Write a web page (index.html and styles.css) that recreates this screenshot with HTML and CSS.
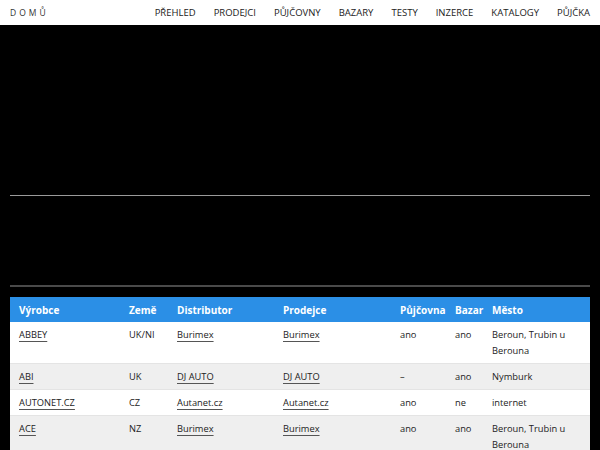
FILE: index.html
```html
<!DOCTYPE html>
<html lang="cs">
<head>
<meta charset="utf-8">
<link rel="stylesheet" href="styles.css">
</head>
<body>
<header class="topbar">
  <a class="brand" href="#">DOMŮ</a>
  <nav class="menu">
    <a href="#">PŘEHLED</a>
    <a href="#">PRODEJCI</a>
    <a href="#">PŮJČOVNY</a>
    <a href="#">BAZARY</a>
    <a href="#">TESTY</a>
    <a href="#">INZERCE</a>
    <a href="#">KATALOGY</a>
    <a href="#">PŮJČKA</a>
  </nav>
</header>
<main class="page">
  <div class="hero"></div>
  <hr class="rule rule-light">
  <div class="spacer"></div>
  <hr class="rule rule-dark">
  <table class="data">
    <colgroup>
      <col class="c1"><col class="c2"><col class="c3"><col class="c4"><col class="c5"><col class="c6"><col class="c7">
    </colgroup>
    <thead>
      <tr><th>Výrobce</th><th>Země</th><th>Distributor</th><th>Prodejce</th><th>Půjčovna</th><th>Bazar</th><th>Město</th></tr>
    </thead>
    <tbody>
      <tr><td><a href="#">ABBEY</a></td><td>UK/NI</td><td><a href="#">Burimex</a></td><td><a href="#">Burimex</a></td><td>ano</td><td>ano</td><td>Beroun, Trubin u Berouna</td></tr>
      <tr><td><a href="#">ABI</a></td><td>UK</td><td><a href="#">DJ AUTO</a></td><td><a href="#">DJ AUTO</a></td><td>–</td><td>ano</td><td>Nymburk</td></tr>
      <tr><td><a href="#">AUTONET.CZ</a></td><td>CZ</td><td><a href="#">Autanet.cz</a></td><td><a href="#">Autanet.cz</a></td><td>ano</td><td>ne</td><td>internet</td></tr>
      <tr><td><a href="#">ACE</a></td><td>NZ</td><td><a href="#">Burimex</a></td><td><a href="#">Burimex</a></td><td>ano</td><td>ano</td><td>Beroun, Trubin u Berouna</td></tr>
    </tbody>
  </table>
</main>
</body>
</html>
```

FILE: styles.css
```css
* { box-sizing: border-box; }
html, body { margin: 0; padding: 0; background: #000; }
body { font-family: "Open Sans", "Noto Sans", sans-serif; color: #222; }

.topbar {
  height: 25px;
  background: #fff;
  display: flex;
  align-items: center;
  justify-content: space-between;
  padding: 0 10px;
}
.brand {
  font-size: 8.5px;
  letter-spacing: 3px;
  color: #333;
  text-decoration: none;
}
.menu { display: flex; gap: 18px; }
.menu a {
  font-size: 9.5px;
  color: #222;
  text-decoration: none;
}

.page { padding: 0 10px; }
.hero { height: 170px; }
.rule { border: 0; margin: 0; }
.rule-light { height: 1px; background: #9a9a9a; }
.spacer { height: 89px; }
.rule-dark { height: 2px; background: #4a4a4a; }

.data {
  margin-top: 10px;
  width: 100%;
  table-layout: fixed;
  border-collapse: collapse;
  font-size: 9.3px;
  background: #fff;
}
.data th {
  background: #2b8fe6;
  color: #fff;
  font-weight: bold;
  font-size: 10px;
  text-align: left;
  height: 25px;
  padding: 0 9px;
}
.data td {
  vertical-align: top;
  padding: 5px 9px 4px;
  line-height: 16px;
  color: #222;
}
.data tbody tr:nth-child(odd) { background: #fff; }
.data tbody tr:nth-child(even) { background: #efefef; }
.data tbody tr + tr td { border-top: 1px solid #e4e4e4; }
.data a { color: #222; text-decoration: underline; text-underline-offset: 3px; text-decoration-thickness: 1px; text-decoration-color: #555; }
.c1 { width: 110px; }
.c2 { width: 48px; }
.c3 { width: 106px; }
.c4 { width: 117px; }
.c5 { width: 55px; }
.c6 { width: 37px; }
.c7 { width: 107px; }
```
